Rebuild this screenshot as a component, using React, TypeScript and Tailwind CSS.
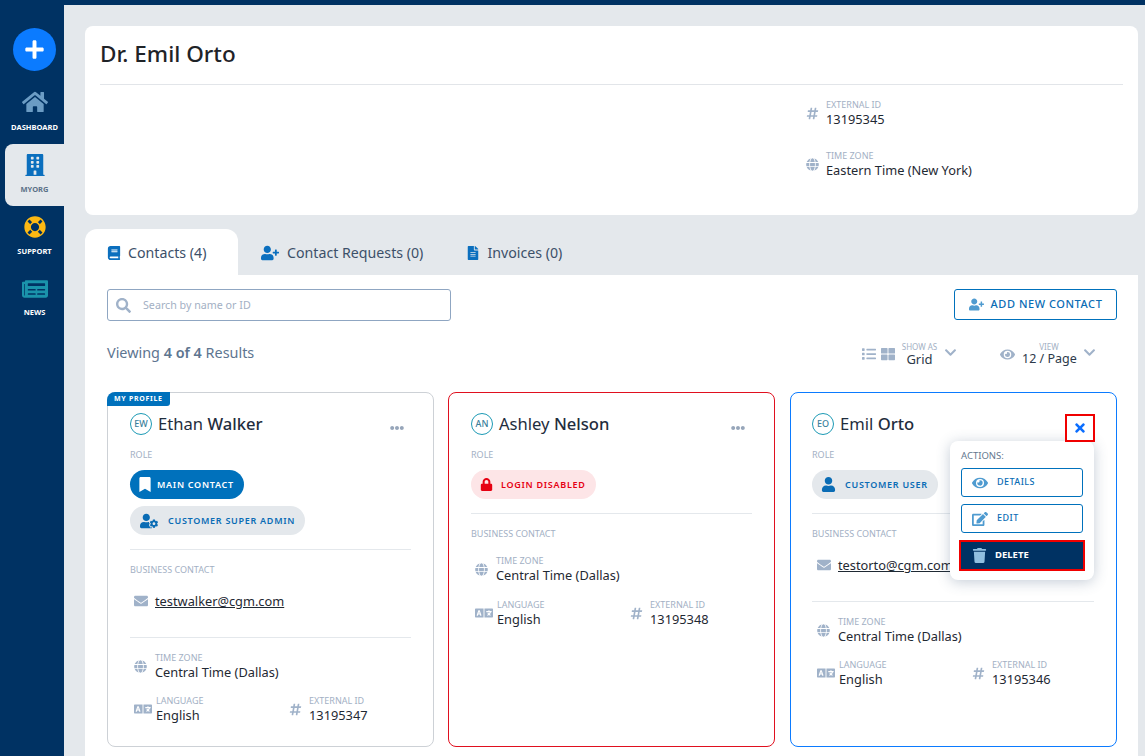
import React from 'react';
import {
  FaBook, FaBookmark, FaBuilding, FaChevronDown, FaEdit, FaEllipsisH, FaEnvelope, FaEye, FaFileAlt,
  FaGlobe, FaHashtag, FaHome, FaLanguage, FaLifeRing, FaList, FaLock, FaNewspaper, FaPlus, FaSearch,
  FaThLarge, FaTimes, FaTrash, FaUser, FaUserCog, FaUserPlus,
} from 'react-icons/fa';

const navItems = [
  { name: 'DASHBOARD', icon: <FaHome size={26} className="text-[#6b9cc4]" />, pad: 'h-[73px] pt-[19px]', gap: 'mt-[8px]' },
  { name: 'MYORG', icon: <FaBuilding size={22} className="text-[#0b6fbe]" />, pad: 'h-[62px] pt-[9px]', gap: 'mt-[7px]', active: true },
  { name: 'SUPPORT', icon: <FaLifeRing size={22} className="text-[#fdb913]" />, pad: 'h-[61px] pt-[9px]', gap: 'mt-[7px]' },
  { name: 'NEWS', icon: <FaNewspaper size={26} className="text-[#1a93ab]" />, pad: 'h-[61px] pt-[10px]', gap: 'mt-[6px]' },
];

function Sidebar() {
  return (
    <aside className="w-16 shrink-0 flex flex-col bg-[#003263] pt-[28px]">
      <div className="w-[43px] h-[43px] ml-[13px] rounded-full bg-[#0b7bff] flex items-center justify-center text-white">
        <FaPlus size={21} />
      </div>
      {navItems.map((item) => (
        <div
          key={item.name}
          className={`ml-[5px] flex flex-col items-center ${item.pad} ${item.active ? 'bg-[#e4e8ec] rounded-l-lg' : ''}`}
        >
          <div className="h-[24px] flex items-center">{item.icon}</div>
          <span className={`${item.gap} text-[7.5px] leading-[10px] font-bold ${item.active ? 'text-[#5b7188]' : 'text-white'}`}>
            {item.name}
          </span>
        </div>
      ))}
    </aside>
  );
}

function Label({ children }: { children: React.ReactNode }) {
  return <div className="text-[9px] leading-[12px] text-[#a3b0c4] uppercase">{children}</div>;
}

function InfoItem({ icon, label, value, className, iconBox }: { icon: React.ReactNode; label: string; value: string; className?: string; iconBox?: string }) {
  return (
    <div className={`flex items-center ${className ?? ''}`}>
      <div className={`${iconBox ?? 'w-[20px]'} flex items-center text-[#a0b2c9]`}>{icon}</div>
      <div>
        <Label>{label}</Label>
        <div className="text-[12.8px] leading-[16px] text-[#1f2933]">{value}</div>
      </div>
    </div>
  );
}

function Badge({ icon, iconBox, text, tone, className }: { icon: React.ReactNode; iconBox: string; text: string; tone: 'main' | 'gray' | 'red'; className?: string }) {
  const tones = {
    main: 'bg-[#0071bc] text-white',
    gray: 'bg-[#e4e8ec] text-[#0a6cb5]',
    red: 'bg-[#fde5e7] text-[#e60012]',
  };
  return (
    <div className={`w-fit h-[29px] rounded-full flex items-center pl-[8px] pr-[10px] text-[9px] font-semibold tracking-[0.08em] ${tones[tone]} ${className ?? ''}`}>
      <span className={`${iconBox} flex justify-center`}>{icon}</span>
      {text}
    </div>
  );
}

function Email({ address }: { address: string }) {
  return (
    <div className="flex items-center pl-[4px] h-[18px]">
      <FaEnvelope size={14} className="text-[#a0b2c9] mr-[7px]" />
      <span className="text-[12.8px] leading-[16px] text-[#1f2933] underline">{address}</span>
    </div>
  );
}

function Details({ id, gap }: { id: string; gap: string }) {
  return (
    <div>
      <InfoItem className="pl-[4px]" iconBox="w-[21px]" icon={<FaGlobe size={13} />} label="Time Zone" value="Central Time (Dallas)" />
      <div className={`flex ${gap}`}>
        <InfoItem className="w-[159px] pl-[4px]" iconBox="w-[22px]" icon={<FaLanguage size={18} />} label="Language" value="English" />
        <InfoItem icon={<FaHashtag size={13} />} label="External ID" value={id} />
      </div>
    </div>
  );
}

function CardHead({ initials, first, last }: { initials: string; first: string; last: string }) {
  return (
    <div className="flex items-center h-[24px]">
      <div className="w-[22px] h-[22px] rounded-full border border-[#1c9ab5] flex items-center justify-center text-[9px] font-medium text-[#3b7f9c]">
        {initials}
      </div>
      <div className="ml-[6px] text-[16.6px] leading-[20px] text-[#1f2d3d]">
        {first} <span className="font-medium">{last}</span>
      </div>
    </div>
  );
}

function CardDots() {
  return <FaEllipsisH size={14} className="absolute top-[28px] right-[29px] text-[#97a6ba]" />;
}

function ActionButton({ icon, text }: { icon: React.ReactNode; text: string }) {
  return (
    <div className="h-[29px] rounded-[3px] border border-[#0071bc] flex items-center pl-[10px] text-[9px] font-medium tracking-[0.05em] text-[#0a6cb5]">
      <span className="w-[25px] text-[#4f9bd0]">{icon}</span>
      <span className="mb-[2px]">{text}</span>
    </div>
  );
}

const cardBase = 'relative h-[355px] rounded-lg border bg-white pr-[22px] pt-[19px]';

export default function App() {
  return (
    <div className="h-screen overflow-hidden flex flex-col bg-[#003263] font-['Noto_Sans','Open_Sans',sans-serif]">
      <div className="flex-1 min-h-0 flex">
        <Sidebar />
        <main className="flex-1 min-w-0 bg-[#e4e8ec] mt-[5px] pl-[21px] pr-[7px] pt-[21px]">
          <section className="h-[189px] rounded-lg bg-white px-[15px]">
            <h1 className="h-[59px] pt-[12px] border-b border-[#e2e5e9] text-[22.5px] leading-[32px] font-medium text-[#1f2328]">Dr. Emil Orto</h1>
            <div className="ml-[706px] pt-[14px]">
              <InfoItem icon={<FaHashtag size={13} />} label="External ID" value="13195345" />
              <div className="mt-[23px]">
                <InfoItem icon={<FaGlobe size={13} />} label="Time Zone" value="Eastern Time (New York)" />
              </div>
            </div>
          </section>

          <div className="mt-[14px] flex h-[46px] text-[14.2px] text-[#3c5069]">
            <div className="w-[153px] rounded-t-xl bg-white flex items-center pl-[22px] pt-[2px]">
              <FaBook size={14} className="text-[#0b6fbe] mr-[7px]" />
              Contacts (4)
            </div>
            <div className="ml-[23px] flex items-center pt-[2px]">
              <FaUserPlus size={18} className="text-[#0b6fbe] mr-[8px]" />
              Contact Requests (0)
            </div>
            <div className="ml-[43px] flex items-center pt-[2px]">
              <FaFileAlt size={14} className="text-[#0b6fbe] mr-[7px]" />
              Invoices (0)
            </div>
          </div>

          <section className="bg-white pl-[22px] pr-[21px] pt-[14px] h-[600px]">
            <div className="flex justify-between items-start">
              <div className="w-[344px] h-[32px] rounded-[3px] border border-[#8fa6c2] flex items-center pl-[8px] text-[10.7px] text-[#a3b0c4]">
                <FaSearch size={15} className="text-[#a0b2c9] mr-[12px]" />
                Search by name or ID
              </div>
              <div className="w-[163px] h-[31px] rounded-[3px] border border-[#0071bc] flex items-center justify-center text-[11px] font-medium tracking-[0.05em] text-[#0a6cb5]">
                <FaUserPlus size={15} className="text-[#4f9bd0] mr-[7px]" />
                ADD NEW CONTACT
              </div>
            </div>

            <div className="mt-[16px] h-[32px] flex items-center text-[#5d7590]">
              <div className="text-[14.4px]">
                Viewing <span className="font-semibold">4 of 4</span> Results
              </div>
              <div className="ml-auto pt-[2px] flex items-center text-[#a0b2c9]">
                <FaList size={14} />
                <FaThLarge size={14} className="ml-[5px]" />
                <div className="ml-[6px] w-[37px] text-center whitespace-nowrap">
                  <div className="text-[8px] leading-[9px] text-[#a3b0c4]">SHOW AS</div>
                  <div className="text-[13px] leading-[16px] text-[#2d3a4a]">Grid</div>
                </div>
                <FaChevronDown size={13} className="ml-[6px] mb-[4px]" />
                <FaEye size={15} className="ml-[43px]" />
                <div className="ml-[7px] w-[54px] text-center whitespace-nowrap">
                  <div className="text-[8px] leading-[9px] text-[#a3b0c4]">VIEW</div>
                  <div className="text-[12.5px] leading-[16px] text-[#2d3a4a]">12 / Page</div>
                </div>
                <FaChevronDown size={13} className="ml-[7px] mr-[21px] mb-[4px]" />
              </div>
            </div>

            <div className="mt-[23px] grid grid-cols-[327px_327px_327px] gap-[14px]">
              <article className={`${cardBase} pl-[22px] border-[#cdd1d6]`}>
                <div className="absolute -top-px -left-px h-[14px] px-[7px] rounded-br-[3px] rounded-tl-lg bg-[#0071bc] text-white text-[7px] leading-[14px] font-bold tracking-[0.1em]">
                  MY PROFILE
                </div>
                <CardHead initials="EW" first="Ethan" last="Walker" />
                <CardDots />
                <div className="mt-[13px]"><Label>Role</Label></div>
                <Badge className="mt-[9px]" tone="main" iconBox="w-[14px] mr-[5px]" icon={<FaBookmark size={15} />} text="MAIN CONTACT" />
                <Badge className="mt-[7px]" tone="gray" iconBox="w-[22px] mr-[8px]" icon={<FaUserCog size={18} />} text="CUSTOMER SUPER ADMIN" />
                <div className="mt-[14px] border-t border-[#e4e8ec]" />
                <div className="mt-[14px]"><Label>Business Contact</Label></div>
                <div className="mt-[16px]"><Email address="testwalker@cgm.com" /></div>
                <div className="mt-[27px] mb-[14px] border-t border-[#e4e8ec]" />
                <Details id="13195347" gap="mt-[15px]" />
              </article>

              <article className={`${cardBase} pl-[22px] border-[#e0101f]`}>
                <CardHead initials="AN" first="Ashley" last="Nelson" />
                <CardDots />
                <div className="mt-[13px]"><Label>Role</Label></div>
                <Badge className="mt-[9px]" tone="red" iconBox="w-[14px] mr-[8px]" icon={<FaLock size={13} />} text="LOGIN DISABLED" />
                <div className="mt-[14px] border-t border-[#e4e8ec]" />
                <div className="mt-[14px] mb-[15px]"><Label>Business Contact</Label></div>
                <Details id="13195348" gap="mt-[16px]" />
              </article>

              <article className={`${cardBase} ml-px w-[327px] pl-[21px] border-[#0b7bff]`}>
                <CardHead initials="EO" first="Emil" last="Orto" />
                <div className="mt-[13px]"><Label>Role</Label></div>
                <Badge className="mt-[9px]" tone="gray" iconBox="w-[17px] mr-[8px]" icon={<FaUser size={15} />} text="CUSTOMER USER" />
                <div className="mt-[14px] border-t border-[#e4e8ec]" />
                <div className="mt-[14px]"><Label>Business Contact</Label></div>
                <div className="mt-[16px] ml-px"><Email address="testorto@cgm.com" /></div>
                <div className="mt-[27px] mb-[14px] border-t border-[#e4e8ec]" />
                <div className="ml-px">
                  <Details id="13195346" gap="mt-[15px]" />
                </div>

                <div className="absolute top-[21px] left-[274px] w-[30px] h-[28px] z-10 border-2 border-[#f00000] bg-white flex items-center justify-center text-[#0b6eff]">
                  <FaTimes size={14} />
                </div>
                <div className="absolute top-[48px] left-[159px] w-[144px] h-[139px] rounded-lg bg-white shadow-[0_2px_14px_rgba(60,85,120,0.3)] px-[11px] pt-[9px]">
                  <div className="text-[9.5px] leading-[12px] text-[#64788f]">ACTIONS:</div>
                  <div className="mt-[6px]">
                    <ActionButton icon={<FaEye size={16} />} text="DETAILS" />
                  </div>
                  <div className="mt-[7px]">
                    <ActionButton icon={<FaEdit size={16} />} text="EDIT" />
                  </div>
                  <div className="mt-[7px] -mx-[2px] h-[31px] border-2 border-[#f00000] bg-[#003263] flex items-center pl-[11px] text-[9.5px] font-bold text-white">
                    <FaTrash size={15} className="text-[#8fbfe0] mr-[8px]" />
                    DELETE
                  </div>
                </div>
              </article>
            </div>
          </section>
        </main>
      </div>
    </div>
  );
}
